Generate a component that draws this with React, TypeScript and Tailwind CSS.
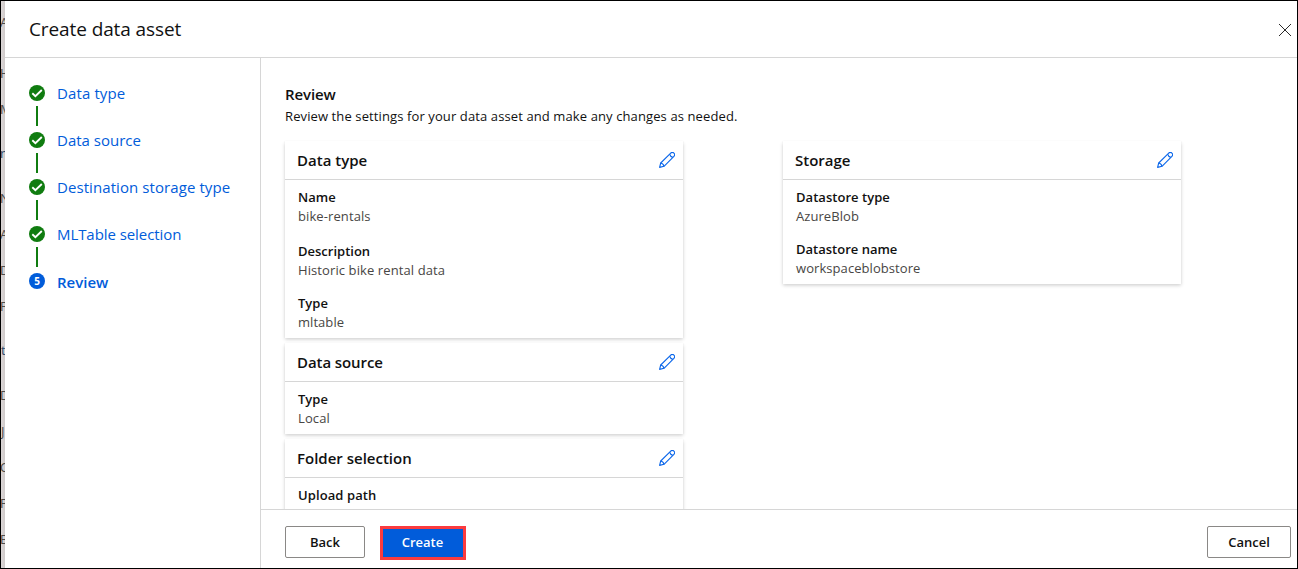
import React from "react";

type Field = { label: string; value?: string; className?: string; labelClass?: string; valueClass?: string };

const steps = [
  { title: "Data type", tracking: "tracking-[0.12px]" },
  { title: "Data source", tracking: "tracking-[0px]" },
  { title: "Destination storage type", tracking: "tracking-[0.08px]" },
  { title: "MLTable selection", tracking: "tracking-[-0.07px]" },
];

const behind = [
  { ch: "A", h: "h-[51px]" },
  { ch: "H", h: "h-[36px]" },
  { ch: "M", h: "h-[44px]" },
  { ch: "n", h: "h-[45px] text-[#2f4a6b]" },
  { ch: "N", h: "h-[36px]" },
  { ch: "A", h: "h-[36px]" },
  { ch: "D", h: "h-[36px]" },
  { ch: "F", h: "h-[44px]" },
  { ch: "t", h: "h-[45px] pl-px text-[#2f4a6b]" },
  { ch: "D", h: "h-[36px]" },
  { ch: "J", h: "h-[36px] pl-px" },
  { ch: "C", h: "h-[36px]" },
  { ch: "F", h: "h-[36px]" },
  { ch: "E", h: "h-[30px]" },
];

function Pencil() {
  return (
    <svg width="16" height="16" viewBox="0 0 16 16" fill="none" stroke="#0a66ea" strokeWidth="1.1" strokeLinejoin="round">
      <path d="M0.6 15.4 L1.7 11 L11.7 1.1 A2.2 2.2 0 0 1 14.9 4.3 L5 14.3 Z" />
      <path d="M10.6 2.2 C11.1 4.1 12 5 13.8 5.4" />
      <path d="M1.7 11 C3.5 11.3 4.6 12.4 5 14.3" />
    </svg>
  );
}

function Check() {
  return (
    <svg width="16" height="16" viewBox="0 0 16 16" fill="none">
      <circle cx="8" cy="8" r="8" fill="#107c10" />
      <path d="M3.3 8.2 L6.4 11.1 L12.8 5" stroke="#fff" strokeWidth="1.9" />
    </svg>
  );
}

function Card({ title, titleClass = "", fields }: { title: string; titleClass?: string; fields: Field[] }) {
  return (
    <section className="w-[398px] shrink-0 bg-white shadow-[0_1.6px_3.6px_rgba(0,0,0,0.2),0_0.3px_0.9px_rgba(0,0,0,0.16)]">
      <header className="flex h-[39px] items-center justify-between border-b border-[#d6d6d6] pr-2 pl-3">
        <h3 className={`text-[15px] font-semibold ${titleClass}`}>{title}</h3>
        <Pencil />
      </header>
      <div className="flex flex-col gap-[14px] py-[7px] pl-[13px] text-[13px]">
        {fields.map((f) => (
          <div key={f.label} className={f.className}>
            <div className={`leading-5 font-semibold ${f.labelClass ?? ""}`}>{f.label}</div>
            <div className={`h-[18px] leading-[18px] text-[#484644] ${f.valueClass ?? ""}`}>{f.value}</div>
          </div>
        ))}
      </div>
    </section>
  );
}

export default function App() {
  return (
    <div className="flex h-[569px] w-[1298px] overflow-hidden border border-black bg-white font-['Open_Sans',sans-serif] text-[#111]">
      <div className="w-1 shrink-0 overflow-hidden bg-[linear-gradient(90deg,#dcd7d7,#cfcaca)] pt-[11px] text-[13px] leading-5 text-[#4f4d4b]">
        {behind.map((b, i) => (
          <div key={i} className={`-ml-px ${b.h}`}>{b.ch}</div>
        ))}
      </div>
      <div className="flex min-w-0 flex-1 flex-col">
        <header className="flex h-[57px] shrink-0 items-center justify-between border-b border-[#d6d6d6] pr-[6px] pl-6">
          <h1 className="text-[19px] tracking-[-0.1px]">Create data asset</h1>
          <svg className="mt-[2px]" width="12" height="12" viewBox="0 0 12 12" stroke="#2b2a2a" strokeWidth="1">
            <path d="M0 0 L12 12 M12 0 L0 12" />
          </svg>
        </header>
        <div className="flex min-h-0 flex-1">
          <nav className="w-64 shrink-0 border-r border-[#d6d6d6] pt-[27px] pl-6">
            {steps.map((s) => (
              <div key={s.title} className="flex h-[47px] gap-3">
                <div className="flex flex-col items-center gap-[5px]">
                  <Check />
                  <span className="h-5 w-0.5 bg-[#107c10]" />
                </div>
                <a className={`text-[15px] leading-[17px] whitespace-nowrap text-[#015cda] ${s.tracking}`}>{s.title}</a>
              </div>
            ))}
            <div className="flex gap-3">
              <span className="flex size-4 items-center justify-center rounded-full bg-[#015cda] text-[10px] leading-4 font-bold text-white">5</span>
              <a className="pt-px text-[15px] leading-[17px] font-semibold text-[#015cda]">Review</a>
            </div>
          </nav>
          <main className="flex min-w-0 flex-1 flex-col">
            <div className="min-h-0 flex-1 overflow-hidden pt-[25px] pl-6">
              <h2 className="text-[15px] leading-[22px] font-semibold tracking-[-0.1px]">Review</h2>
              <p className="text-[13px] leading-[22px] tracking-[0.11px]">Review the settings for your data asset and make any changes as needed.</p>
              <div className="mt-[14px] flex items-start gap-[100px]">
                <div className="flex flex-col gap-[5px]">
                  <Card
                    title="Data type"
                    fields={[
                      { label: "Name", value: "bike-rentals", className: "mb-[2px]", valueClass: "tracking-[0.1px]" },
                      { label: "Description", value: "Historic bike rental data", valueClass: "tracking-[0.1px]" },
                      { label: "Type", value: "mltable", valueClass: "tracking-[0.05px]" },
                    ]}
                  />
                  <Card title="Data source" titleClass="tracking-[-0.08px]" fields={[{ label: "Type", value: "Local", valueClass: "tracking-[0.1px]" }]} />
                  <Card title="Folder selection" fields={[{ label: "Upload path", labelClass: "tracking-[0.1px]" }]} />
                </div>
                <Card
                  title="Storage"
                  fields={[
                    { label: "Datastore type", value: "AzureBlob", labelClass: "tracking-[0.04px]", valueClass: "tracking-[0.06px]" },
                    { label: "Datastore name", value: "workspaceblobstore", valueClass: "tracking-[0.07px]" },
                  ]}
                />
              </div>
            </div>
            <footer className="flex h-[59px] shrink-0 items-start border-t border-[#d6d6d6] pt-4 pr-[6px] pl-6 text-[13px] font-semibold">
              <button className="h-8 w-20 rounded-[2px] border border-[#8a8886] pt-px">Back</button>
              <button className="ml-[15px] h-[34px] w-[86px] border-3 border-[#fb3b3f] bg-[#015cda] pr-px text-white">Create</button>
              <button className="ml-auto h-8 w-[84px] rounded-[2px] border border-[#8a8886] pt-px">Cancel</button>
            </footer>
          </main>
        </div>
      </div>
    </div>
  );
}
